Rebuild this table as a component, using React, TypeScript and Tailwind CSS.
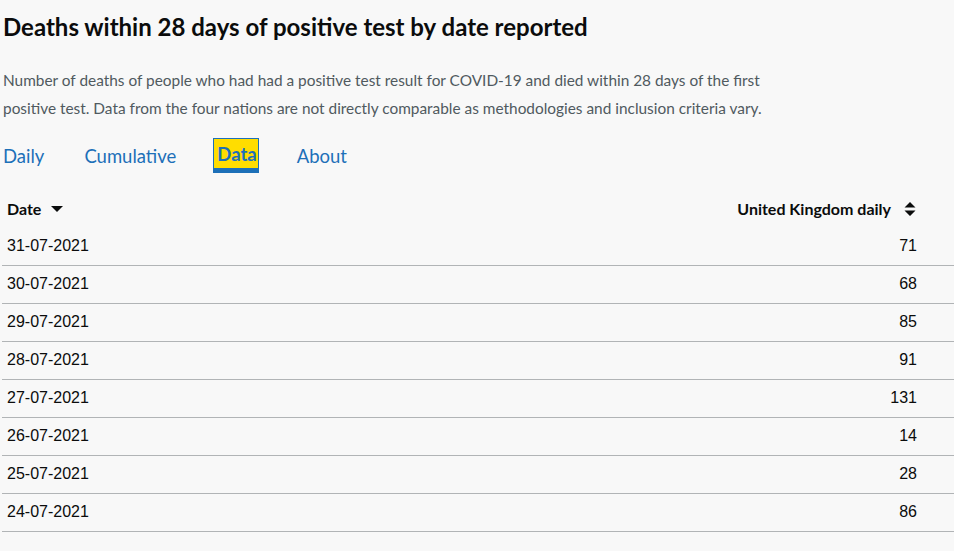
import React from "react";

const rows: [string, number][] = [
  ["31-07-2021", 71],
  ["30-07-2021", 68],
  ["29-07-2021", 85],
  ["28-07-2021", 91],
  ["27-07-2021", 131],
  ["26-07-2021", 14],
  ["25-07-2021", 28],
  ["24-07-2021", 86],
];

const SortDown = () => (
  <svg width="12" height="8" viewBox="0 0 12 8" className="inline-block">
    <path d="M0 1h12L6 7z" fill="#0b0c0c" />
  </svg>
);

const SortBoth = () => (
  <svg width="12" height="16" viewBox="0 0 12 16" className="inline-block">
    <path d="M6 1l5.5 5.5H0.5z M0.5 9.5h11L6 15z" fill="#0b0c0c" />
  </svg>
);

export default function App() {
  return (
    <div className="min-h-screen bg-[#f8f8f8] text-[#0b0c0c] font-['Lato','Noto_Sans',sans-serif]">
      <h1 className="pl-[3px] pt-[12px] text-[24px] leading-[30px] font-bold">
        Deaths within 28 days of positive test by date reported
      </h1>

      <p className="pl-[3px] mt-[24px] text-[15.4px] leading-[28px] text-[#505a5f]">
        <span className="block">
          Number of deaths of people who had had a positive test result for COVID-19 and died within 28 days of the first
        </span>
        <span className="block">
          positive test. Data from the four nations are not directly comparable as methodologies and inclusion criteria vary.
        </span>
      </p>

      <nav className="flex items-center gap-[40px] pl-[3px] mt-[16px] text-[18.5px] leading-[28px] text-[#1d70b8]">
        <span>Daily</span>
        <span>Cumulative</span>
        <span className="-ml-[3px] -mr-[2px] border border-b-[5px] border-[#1d70b8] bg-[#ffdd00] pl-[3px] pr-[1px] pt-[1px] font-bold text-[#1d70b8]">
          Data
        </span>
        <span>About</span>
      </nav>

      <table className="mt-[17px] ml-[2px] w-[952px] border-collapse font-['Liberation_Sans',Arial,sans-serif] text-[16px]">
        <thead>
          <tr className="h-[37px]">
            <th className="pl-[5px] text-left font-['Lato',sans-serif] font-bold text-[16px]">
              <span className="inline-flex items-center gap-[10px]">
                Date <SortDown />
              </span>
            </th>
            <th className="pr-[38px] text-right font-['Lato',sans-serif] font-bold text-[16px]">
              <span className="inline-flex items-center gap-[13px]">
                United Kingdom daily <SortBoth />
              </span>
            </th>
          </tr>
        </thead>
        <tbody>
          {rows.map(([d, n]) => (
            <tr key={d} className="h-[38px] border-b border-[#b1b4b6]">
              <td className="pl-[5px]">{d}</td>
              <td className="pr-[37px] text-right">{n}</td>
            </tr>
          ))}
        </tbody>
      </table>
    </div>
  );
}
